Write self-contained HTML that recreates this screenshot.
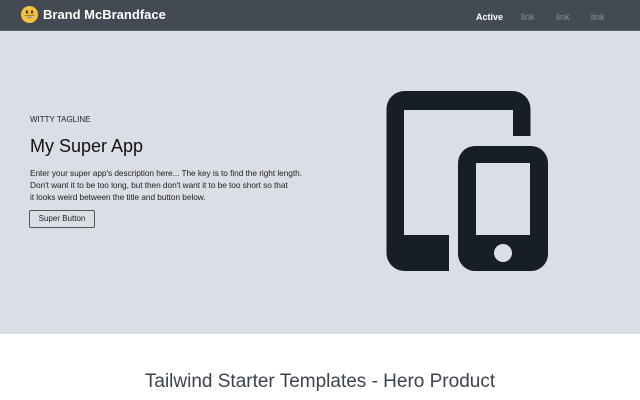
<!DOCTYPE html>
<html><head><style>
*{margin:0;padding:0;box-sizing:border-box}
body{width:640px;height:400px;overflow:hidden;font-family:"Liberation Sans",sans-serif;background:#fff}
nav{height:31px;background:#434a54;border-bottom:1px solid #5a6068;position:relative;color:#fff}
.brand{position:absolute;left:21px;top:6px;font-size:13px;font-weight:bold;display:flex;align-items:center}
.em{width:17px;height:17px;border-radius:50%;background:#f5c33b;margin-right:5px;position:relative}
.links{position:absolute;top:12px;font-size:9px}
.hero{height:303px;background:#dbdee5;position:relative}
.tag{position:absolute;left:30px;top:115px;font-size:8px;color:#1a202c}
h1{position:absolute;left:30px;top:136px;font-size:18px;font-weight:normal;color:#111}
p{position:absolute;left:30px;top:167px;font-size:8.3px;line-height:12px;color:#222;white-space:nowrap;letter-spacing:-0.05px}
.btn{position:absolute;left:29px;top:210px;width:66px;height:18px;border:1px solid #555;border-radius:2px;font-size:8px;text-align:center;line-height:16px;color:#222}
h2{position:absolute;top:371px;width:100%;text-align:center;font-size:19px;font-weight:normal;color:#3d434b}
</style></head><body>
<nav><div class="brand"><div class="em"><svg width="17" height="17" viewBox="0 0 17 17" style="position:absolute;left:0;top:0"><ellipse cx="6" cy="6" rx="1.2" ry="1.8" fill="#5a3a10"/><ellipse cx="11" cy="6" rx="1.2" ry="1.8" fill="#5a3a10"/><path d="M3.5 9.5 Q8.5 15 13.5 9.5 Z" fill="#5a3a10"/><path d="M4.5 10 Q8.5 11 12.5 10 L12 11 Q8.5 12 5 11Z" fill="#fff"/></svg></div>Brand McBrandface</div>
<span class="links" style="left:476px;font-weight:bold">Active</span>
<span class="links" style="left:521px;color:#8a9099">link</span>
<span class="links" style="left:556px;color:#8a9099">link</span>
<span class="links" style="left:591px;color:#8a9099">link</span>
</nav>
<div class="hero">
<svg width="640" height="303" viewBox="0 31 640 303" style="position:absolute;left:0;top:0">
<rect x="386.5" y="91" width="144" height="180" rx="18" fill="#181e28"/>
<rect x="404" y="110" width="109" height="125" fill="#dbdee5"/>
<rect x="449" y="136" width="120" height="140" fill="#dbdee5"/>
<rect x="458" y="146" width="90" height="125" rx="17" fill="#181e28"/>
<rect x="476" y="163" width="54" height="72" fill="#dbdee5"/>
<circle cx="503" cy="253" r="9" fill="#dbdee5"/>
</svg>
</div>
<div class="tag">WITTY TAGLINE</div>
<h1>My Super App</h1>
<p>Enter your super app's description here... The key is to find the right length.<br>Don't want it to be too long, but then don't want it to be too short so that<br>it looks weird between the title and button below.</p>
<div class="btn">Super Button</div>
<h2>Tailwind Starter Templates - Hero Product</h2>
</body></html>
